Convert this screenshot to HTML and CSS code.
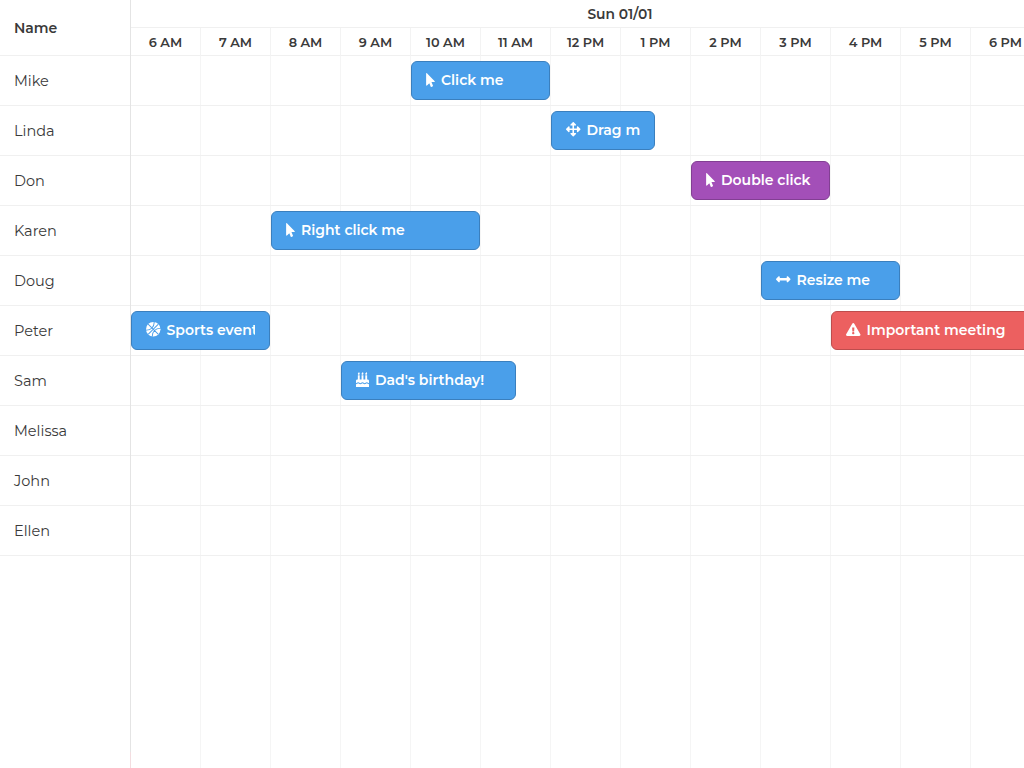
FILE: index.html
```html
<!DOCTYPE html>
<html lang="en">
<head>
<meta charset="utf-8">
<title>Scheduler</title>
<link rel="stylesheet" href="styles.css">
</head>
<body>
<div class="scheduler">
  <aside class="resources">
    <div class="res-head">Name</div>
    <div class="res">Mike</div><div class="res">Linda</div><div class="res">Don</div><div class="res">Karen</div><div class="res">Doug</div>
    <div class="res">Peter</div><div class="res">Sam</div><div class="res">Melissa</div><div class="res">John</div><div class="res">Ellen</div>
  </aside>
  <main class="timeline">
    <div class="date">Sun 01/01</div>
    <div class="hours">
      <div class="hour">6 AM</div><div class="hour">7 AM</div><div class="hour">8 AM</div><div class="hour">9 AM</div><div class="hour">10 AM</div><div class="hour">11 AM</div><div class="hour">12 PM</div><div class="hour">1 PM</div><div class="hour">2 PM</div><div class="hour">3 PM</div><div class="hour">4 PM</div><div class="hour">5 PM</div><div class="hour">6 PM</div><div class="hour">7 PM</div>
    </div>
    <div class="grid">
      <div class="row"><div class="event blue s4 o4"><div class="inner"><svg class="ic pointer" viewBox="0 0 320 512"><path d="M302.189 329.126H196.105l55.831 135.993c3.889 9.428-.555 19.999-9.444 23.999l-49.165 21.427c-9.165 4-19.443-.571-23.332-9.714l-53.053-129.136-86.664 89.138C18.729 472.71 0 463.554 0 447.977V18.299C0 1.899 19.921-6.096 30.277 5.443l284.412 292.542c11.472 11.179 3.007 31.141-12.5 31.141z"/></svg><span>Click me</span></div></div></div>
      <div class="row"><div class="event blue s3 o6"><div class="inner"><svg class="ic square" viewBox="0 0 512 512"><path d="M352.201 425.775l-79.196 79.196c-9.373 9.373-24.568 9.373-33.941 0l-79.196-79.196c-15.119-15.119-4.411-40.971 16.971-40.97h51.162L228 284H127.196v51.162c0 21.382-25.851 32.09-40.971 16.971L7.029 272.937c-9.373-9.373-9.373-24.569 0-33.941L86.225 159.8c15.119-15.119 40.971-4.411 40.971 16.971V228H228V127.196h-51.23c-21.382 0-32.09-25.851-16.971-40.971l79.196-79.196c9.373-9.373 24.568-9.373 33.941 0l79.196 79.196c15.119 15.119 4.411 40.971-16.971 40.971h-51.162V228h100.804v-51.162c0-21.382 25.851-32.09 40.97-16.971l79.196 79.196c9.373 9.373 9.373 24.569 0 33.941L425.773 352.2c-15.119 15.119-40.971 4.411-40.97-16.971V284H284v100.804h51.23c21.382 0 32.09 25.851 16.971 40.971z"/></svg><span>Drag me</span></div></div></div>
      <div class="row"><div class="event purple s4 o8"><div class="inner"><svg class="ic pointer" viewBox="0 0 320 512"><path d="M302.189 329.126H196.105l55.831 135.993c3.889 9.428-.555 19.999-9.444 23.999l-49.165 21.427c-9.165 4-19.443-.571-23.332-9.714l-53.053-129.136-86.664 89.138C18.729 472.71 0 463.554 0 447.977V18.299C0 1.899 19.921-6.096 30.277 5.443l284.412 292.542c11.472 11.179 3.007 31.141-12.5 31.141z"/></svg><span>Double click</span></div></div></div>
      <div class="row"><div class="event blue s6 o2"><div class="inner"><svg class="ic pointer" viewBox="0 0 320 512"><path d="M302.189 329.126H196.105l55.831 135.993c3.889 9.428-.555 19.999-9.444 23.999l-49.165 21.427c-9.165 4-19.443-.571-23.332-9.714l-53.053-129.136-86.664 89.138C18.729 472.71 0 463.554 0 447.977V18.299C0 1.899 19.921-6.096 30.277 5.443l284.412 292.542c11.472 11.179 3.007 31.141-12.5 31.141z"/></svg><span>Right click me</span></div></div></div>
      <div class="row"><div class="event blue s4 o9"><div class="inner"><svg class="ic square" viewBox="0 0 512 512"><path d="M377.941 169.941V216H134.059v-46.059c0-21.382-25.851-32.09-40.971-16.971L7.029 239.029c-9.373 9.373-9.373 24.568 0 33.941l86.059 86.059c15.119 15.119 40.971 4.411 40.971-16.971V296h243.882v46.059c0 21.382 25.851 32.09 40.971 16.971l86.059-86.059c9.373-9.373 9.373-24.568 0-33.941l-86.059-86.059c-15.119-15.12-40.971-4.412-40.971 16.97z"/></svg><span>Resize me</span></div></div></div>
      <div class="row">
        <div class="event blue s4 o0"><div class="inner"><svg class="ic ball" viewBox="0 0 24 24"><circle cx="12" cy="12" r="12"/><g transform="rotate(45 12 12)"><path class="cut" d="M12 0v24M0 12h24M4.500 2.500c3.500 3 4.500 7 4.500 9.500s-1 6.500-4.500 9.500M19.500 2.500c-3.500 3-4.500 7-4.500 9.500s1 6.500 4.500 9.500"/></g></svg><span>Sports event</span></div></div>
        <div class="event red s6 o10"><div class="inner"><svg class="ic warn" viewBox="0 0 576 512"><path d="M569.517 440.013C587.975 472.007 564.806 512 527.94 512H48.054c-36.937 0-59.999-40.055-41.577-71.987L246.423 24c18.467-32.009 64.72-31.951 83.154 0l239.94 416.013zM288 354c-25.405 0-46 20.595-46 46s20.595 46 46 46 46-20.595 46-46-20.595-46-46-46zm-43.673-165.346l7.418 136c.347 6.364 5.609 11.346 11.982 11.346h48.546c6.373 0 11.635-4.982 11.982-11.346l7.418-136c.375-6.874-5.098-12.654-11.982-12.654h-63.383c-6.884 0-12.356 5.78-11.981 12.654z"/></svg><span>Important meeting</span></div></div>
      </div>
      <div class="row"><div class="event blue s5 o3"><div class="inner"><svg class="ic cake" viewBox="0 0 448 512"><path d="M448 384c-28.020 0-31.260-32-74.500-32-43.430 0-46.825 32-74.750 32-27.695 0-31.454-32-74.750-32-42.842 0-47.218 32-74.500 32-28.148 0-31.202-32-74.750-32-43.547 0-46.653 32-74.750 32v-80c0-26.500 21.500-48 48-48h16V112h64v144h64V112h64v144h64V112h64v144h16c26.500 0 48 21.500 48 48v80zm0 128H0v-96c43.356 0 46.767-32 74.750-32 27.951 0 31.253 32 74.750 32 42.843 0 47.217-32 74.500-32 28.148 0 31.201 32 74.750 32 43.357 0 46.767-32 74.750-32 27.488 0 31.252 32 74.500 32v96zM96 96c-17.750 0-32-14.250-32-32 0-31 32-23 32-64 12 0 32 29.500 32 56s-14.250 40-32 40zm128 0c-17.750 0-32-14.250-32-32 0-31 32-23 32-64 12 0 32 29.500 32 56s-14.250 40-32 40zm128 0c-17.750 0-32-14.250-32-32 0-31 32-23 32-64 12 0 32 29.500 32 56s-14.250 40-32 40z"/></svg><span>Dad's birthday!</span></div></div></div>
      <div class="row"></div><div class="row"></div><div class="row"></div>
    </div>
  </main>
</div>
</body>
</html>
```
FILE: styles.css
```css
* { box-sizing: border-box; }
html, body { margin: 0; height: 100%; overflow: hidden; background: #fff; }
body { font-family: Montserrat, Inter, "Liberation Sans", sans-serif; color: #3a3a3a; }
.scheduler { display: flex; width: 1024px; height: 768px; }
.resources { position: relative; flex: 0 0 131px; border-right: 1px solid #e4e4e4; }
.resources::after { content: ""; position: absolute; right: -1px; bottom: 0; width: 1px; height: 16px; background: #f3dde0; }
.res-head { height: 56px; display: flex; align-items: center; padding-left: 14px; font-size: 14px; font-weight: 600; border-bottom: 1px solid #f0f0f0; }
.res { height: 50px; display: flex; align-items: center; padding-left: 14px; font-size: 14.500px; border-bottom: 1px solid #f0f0f0; }
.timeline { flex: 1; min-width: 0; overflow: hidden; display: flex; flex-direction: column; }
.date { height: 28px; flex: none; width: 980px; display: flex; align-items: center; justify-content: center; padding-right: 2px; font-size: 13.800px; font-weight: 600; border-bottom: 1px solid #f0f0f0; }
.hours { display: flex; height: 28px; flex: none; width: 980px; }
.hour { flex: 0 0 70px; display: flex; align-items: center; justify-content: center; padding-top: 1px; font-size: 12.800px; font-weight: 600; border-right: 1px solid #f3f3f3; border-bottom: 1px solid #f0f0f0; }
.grid { flex: 1; background-image: repeating-linear-gradient(to right, transparent 0 69px, #f5f5f5 69px 70px); }
.row { position: relative; height: 50px; border-bottom: 1px solid #f0f0f0; }
.event { position: absolute; top: 5px; height: 39px; display: flex; padding: 0 14px 2px; color: #fff; font-size: 14px; font-weight: 600; border-radius: 6px; border: 1px solid; }
.inner { flex: 1; min-width: 0; overflow: hidden; display: flex; align-items: center; gap: 6px; white-space: nowrap; }
.blue { background: #4a9fea; border-color: #3a7fbe; }
.purple { background: #a34fb8; border-color: #823f93; }
.red { background: #ec6060; border-color: #bd4d4d; }
.s3 { width: 104px; } .s4 { width: 139px; } .s5 { width: 175px; } .s6 { width: 209px; }
.o0 { left: 0; } .o2 { left: 140px; } .o3 { left: 210px; } .o4 { left: 280px; } .o6 { left: 420px; } .o8 { left: 560px; } .o9 { left: 630px; } .o10 { left: 700px; }
.ic { fill: #fff; flex: none; }
.pointer { width: 9px; height: 14px; }
.square { width: 14.500px; height: 14.500px; }
.ball { width: 14.500px; height: 14.500px; }
.warn { width: 14.500px; height: 13px; }
.cake { width: 13px; height: 15px; }
.cut { fill: none; stroke: #4a9fea; stroke-width: 1.600; }
```
